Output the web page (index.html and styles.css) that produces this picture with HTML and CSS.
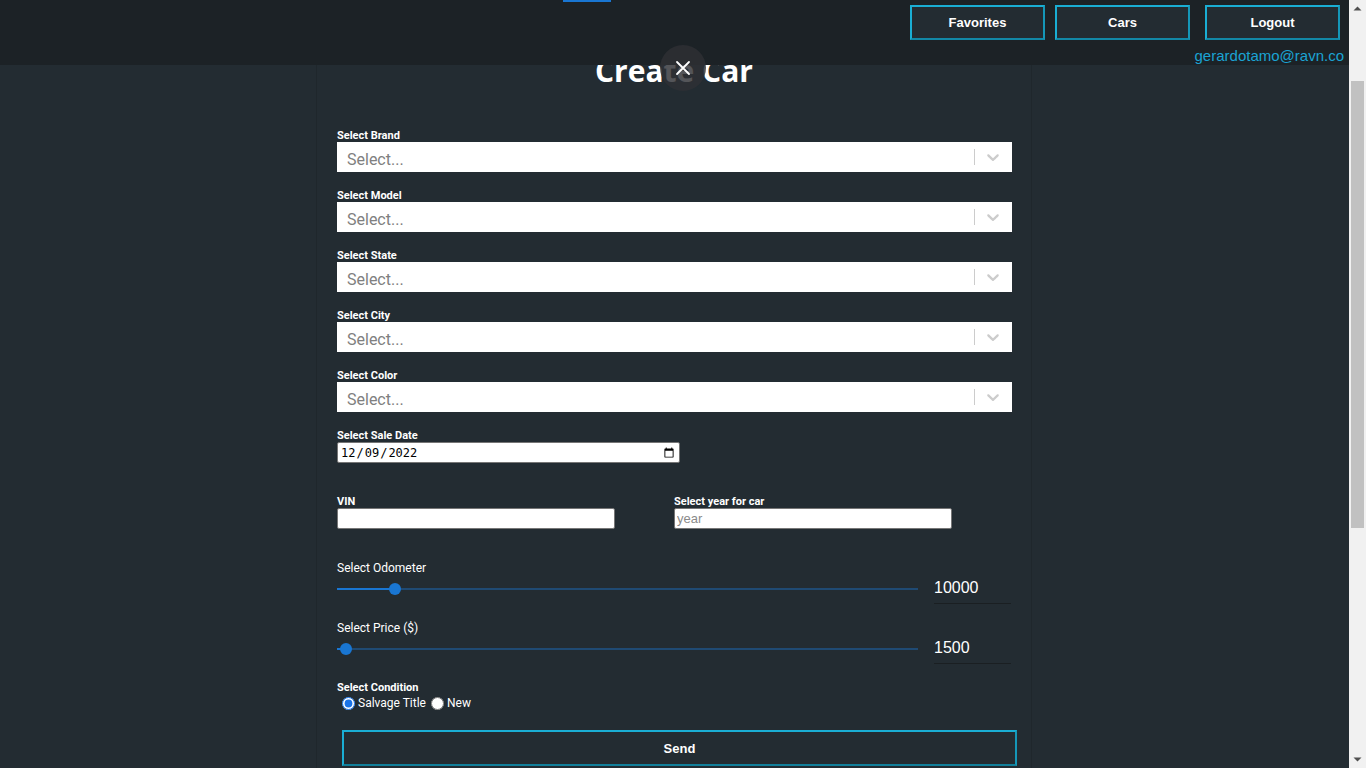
FILE: index.html
```html
<!DOCTYPE html>
<html lang="en">
<head>
<meta charset="utf-8">
<title>Create Car</title>
<link rel="stylesheet" href="styles.css">
</head>
<body>
<header class="topbar">
  <div class="tab-indicator"></div>
  <nav class="nav">
    <button class="nav-btn">Favorites</button>
    <button class="nav-btn">Cars</button>
    <button class="nav-btn logout">Logout</button>
  </nav>
  <div class="user-email">gerardotamo@ravn.co</div>
</header>

<aside class="fake-scrollbar" aria-hidden="true">
  <div class="sb-btn"><svg width="17" height="17" viewBox="0 0 17 17"><path d="M4.5 10.5L8.5 6.5L12.5 10.5Z" fill="#505050"/></svg></div>
  <div class="sb-track"><div class="sb-thumb"></div></div>
  <div class="sb-btn"><svg width="17" height="17" viewBox="0 0 17 17"><path d="M4.5 6.5L8.5 10.5L12.5 6.5Z" fill="#505050"/></svg></div>
</aside>

<button class="close-btn" aria-label="Close">
  <svg width="16" height="16" viewBox="0 0 16 16"><path d="M2 2L14 14M14 2L2 14" stroke="#fff" stroke-width="1.8" stroke-linecap="round"/></svg>
</button>

<main class="page">
  <section class="card">
    <h1 class="title">Create Car</h1>
    <form class="form">
      <div class="group">
        <label class="lbl">Select Brand</label>
        <div class="select"><span class="ph">Select...</span><span class="sep"></span><svg class="chev" viewBox="0 0 20 20" width="20" height="20"><path d="M4.516 7.548c0.436-0.446 1.043-0.481 1.576 0l3.908 3.747 3.908-3.747c0.533-0.481 1.141-0.446 1.574 0 0.436 0.445 0.408 1.197 0 1.615-0.406 0.418-4.695 4.502-4.695 4.502-0.217 0.223-0.502 0.335-0.787 0.335s-0.57-0.112-0.789-0.335c0 0-4.287-4.084-4.695-4.502s-0.436-1.170 0-1.615z" fill="#ccc"/></svg></div>
      </div>
      <div class="group">
        <label class="lbl">Select Model</label>
        <div class="select"><span class="ph">Select...</span><span class="sep"></span><svg class="chev" viewBox="0 0 20 20" width="20" height="20"><path d="M4.516 7.548c0.436-0.446 1.043-0.481 1.576 0l3.908 3.747 3.908-3.747c0.533-0.481 1.141-0.446 1.574 0 0.436 0.445 0.408 1.197 0 1.615-0.406 0.418-4.695 4.502-4.695 4.502-0.217 0.223-0.502 0.335-0.787 0.335s-0.57-0.112-0.789-0.335c0 0-4.287-4.084-4.695-4.502s-0.436-1.170 0-1.615z" fill="#ccc"/></svg></div>
      </div>
      <div class="group">
        <label class="lbl">Select State</label>
        <div class="select"><span class="ph">Select...</span><span class="sep"></span><svg class="chev" viewBox="0 0 20 20" width="20" height="20"><path d="M4.516 7.548c0.436-0.446 1.043-0.481 1.576 0l3.908 3.747 3.908-3.747c0.533-0.481 1.141-0.446 1.574 0 0.436 0.445 0.408 1.197 0 1.615-0.406 0.418-4.695 4.502-4.695 4.502-0.217 0.223-0.502 0.335-0.787 0.335s-0.57-0.112-0.789-0.335c0 0-4.287-4.084-4.695-4.502s-0.436-1.170 0-1.615z" fill="#ccc"/></svg></div>
      </div>
      <div class="group">
        <label class="lbl">Select City</label>
        <div class="select"><span class="ph">Select...</span><span class="sep"></span><svg class="chev" viewBox="0 0 20 20" width="20" height="20"><path d="M4.516 7.548c0.436-0.446 1.043-0.481 1.576 0l3.908 3.747 3.908-3.747c0.533-0.481 1.141-0.446 1.574 0 0.436 0.445 0.408 1.197 0 1.615-0.406 0.418-4.695 4.502-4.695 4.502-0.217 0.223-0.502 0.335-0.787 0.335s-0.57-0.112-0.789-0.335c0 0-4.287-4.084-4.695-4.502s-0.436-1.170 0-1.615z" fill="#ccc"/></svg></div>
      </div>
      <div class="group">
        <label class="lbl">Select Color</label>
        <div class="select"><span class="ph">Select...</span><span class="sep"></span><svg class="chev" viewBox="0 0 20 20" width="20" height="20"><path d="M4.516 7.548c0.436-0.446 1.043-0.481 1.576 0l3.908 3.747 3.908-3.747c0.533-0.481 1.141-0.446 1.574 0 0.436 0.445 0.408 1.197 0 1.615-0.406 0.418-4.695 4.502-4.695 4.502-0.217 0.223-0.502 0.335-0.787 0.335s-0.57-0.112-0.789-0.335c0 0-4.287-4.084-4.695-4.502s-0.436-1.170 0-1.615z" fill="#ccc"/></svg></div>
      </div>
      <div class="group date-group">
        <label class="lbl">Select Sale Date</label>
        <input class="date-input" type="date" value="2022-12-09">
      </div>
      <div class="two-col">
        <div class="col">
          <label class="lbl">VIN</label>
          <input class="text-input" type="text">
        </div>
        <div class="col">
          <label class="lbl">Select year for car</label>
          <input class="text-input" type="text" placeholder="year">
        </div>
      </div>
      <div class="range-group first">
        <div class="range-lbl">Select Odometer</div>
        <div class="range-row">
          <div class="slider"><div class="rail"></div><div class="fill" style="width:10%"></div><div class="thumb" style="left:10%"></div></div>
          <div class="value">10000</div>
        </div>
      </div>
      <div class="range-group">
        <div class="range-lbl">Select Price ($)</div>
        <div class="range-row">
          <div class="slider"><div class="rail"></div><div class="fill" style="width:1.5%"></div><div class="thumb" style="left:1.5%"></div></div>
          <div class="value">1500</div>
        </div>
      </div>
      <div class="cond-group">
        <label class="lbl">Select Condition</label>
        <div class="radios">
          <label class="radio"><input type="radio" name="cond" checked> Salvage Title</label>
          <label class="radio"><input type="radio" name="cond"> New</label>
        </div>
      </div>
      <button type="button" class="send">Send</button>
    </form>
  </section>
</main>
<script src="script.js"></script>
</body>
</html>
```

FILE: styles.css
```css
body {
  margin: 0;
  padding-right: 18px;
  background: #232c32;
  color: #fff;
  font-family: "Liberation Sans", Arial, sans-serif;
}

.fake-scrollbar {
  position: fixed;
  top: 0;
  right: 0;
  bottom: 0;
  width: 17px;
  background: #f1f1f1;
  display: flex;
  flex-direction: column;
  z-index: 30;
}
.sb-btn {
  height: 17px;
  flex: 0 0 17px;
}
.sb-btn svg {
  display: block;
}
.sb-track {
  flex: 1;
  padding: 64px 2px 0;
}
.sb-thumb {
  height: 447px;
  background: #c1c1c1;
}

.topbar {
  position: fixed;
  top: 0;
  left: 0;
  right: 17px;
  height: 65px;
  background: #1c2226;
  z-index: 10;
}
.tab-indicator {
  position: absolute;
  left: 563px;
  top: 0;
  width: 48px;
  height: 2px;
  background: #1976d2;
}
.nav {
  display: flex;
  justify-content: flex-end;
  gap: 10px;
  padding: 5px 9px 0 0;
}
.nav-btn {
  width: 135px;
  height: 35px;
  background: #232c32;
  color: #fff;
  border: 2px solid;
  border-color: #1aaed4 #1597b8 #1288a6 #1aaed4;
  font: bold 13px "Liberation Sans", Arial, sans-serif;
  padding: 0;
}
.nav-btn.logout {
  margin-left: 5px;
}
.user-email {
  text-align: right;
  padding-right: 5px;
  margin-top: 6px;
  font-size: 15px;
  line-height: 20px;
  color: #1ba3d3;
}

.close-btn {
  position: fixed;
  left: 660px;
  top: 45px;
  width: 46px;
  height: 46px;
  border-radius: 50%;
  border: none;
  background: rgba(46, 48, 52, 0.82);
  z-index: 20;
  padding: 0;
  display: flex;
  align-items: center;
  justify-content: center;
}

.page {
  min-height: 1260px;
  box-sizing: border-box;
  padding-top: 100px;
}
.card {
  width: 716px;
  margin: 0 auto;
  box-sizing: border-box;
  padding: 61px 20px 40px;
  border-left: 1px solid #1f272c;
  border-right: 1px solid #1f272c;
}
.title {
  margin: 0;
  text-align: center;
  font: bold 30px/40px "Open Sans", sans-serif;
}
.form {
  margin-top: 37px;
  display: flex;
  flex-direction: column;
}
.lbl {
  display: block;
  font: bold 11px/14px Roboto, sans-serif;
  padding-top: 1px;
  margin-bottom: -1px;
}
.group {
  margin-bottom: 16px;
}
.select {
  height: 30px;
  background: #fff;
  display: flex;
  align-items: center;
  width: 675px;
}
.ph {
  flex: 1;
  padding: 4px 0 0 10px;
  color: #808080;
  font: 16px Roboto, sans-serif;
}
.sep {
  width: 1px;
  height: 16px;
  background: #ccc;
}
.chev {
  margin: 0 9px 0 8px;
}
.date-group {
  margin-bottom: 31px;
}
.date-input {
  display: block;
  width: 343px;
  height: 21px;
  box-sizing: border-box;
  margin: 0;
  border: 1px solid #767676;
  border-radius: 2px;
  font: 12px "DejaVu Sans Mono", monospace;
  padding: 1px 2px;
  background: #fff;
}
.two-col {
  display: flex;
}
.col {
  width: 338px;
}
.text-input {
  display: block;
  width: 278px;
  height: 21px;
  box-sizing: border-box;
  margin: 0;
  border: 1px solid #767676;
  border-radius: 2px;
  padding: 1px 2px;
  font: 13px "Liberation Sans", Arial, sans-serif;
  background: #fff;
}
.text-input::placeholder {
  color: #8a8a8a;
}
.range-group {
  margin-top: 15px;
}
.range-group.first {
  margin-top: 30px;
}
.range-lbl {
  font: 12px/16px Roboto, sans-serif;
  padding-top: 1px;
  margin-bottom: -1px;
}
.range-row {
  display: flex;
  align-items: center;
  height: 29px;
}
.slider {
  position: relative;
  flex: 0 0 581px;
  height: 12px;
  margin-right: 16px;
  margin-top: -2px;
}
.rail {
  position: absolute;
  left: 0;
  right: 0;
  top: 5px;
  height: 2px;
  background: #1f4a73;
}
.fill {
  position: absolute;
  left: 0;
  top: 5px;
  height: 2px;
  background: #1976d2;
}
.thumb {
  position: absolute;
  top: 0;
  width: 12px;
  height: 12px;
  margin-left: -6px;
  border-radius: 50%;
  background: #1976d2;
}
.value {
  width: 78px;
  height: 29px;
  box-sizing: border-box;
  border-bottom: 1px solid #1a1f22;
  font-size: 16px;
  line-height: 26px;
  align-self: flex-start;
}
.cond-group {
  margin-top: 16px;
}
.radios {
  display: flex;
  font: 12px/16px Roboto, sans-serif;
  margin-top: 1px;
}
.radio {
  display: flex;
  align-items: center;
}
.radio input {
  margin: 0 3px 0 5px;
  width: 13px;
  height: 13px;
  accent-color: #1a73e8;
}
.send {
  margin: 19px 0 0 5px;
  width: 675px;
  height: 36px;
  background: #232c32;
  color: #fff;
  border: 2px solid;
  border-color: #1aaed4 #1597b8 #117f9a #1aaed4;
  font: bold 13px "Liberation Sans", Arial, sans-serif;
}
```

FILE: script.js
```js
window.scrollTo(0, 110);
```
